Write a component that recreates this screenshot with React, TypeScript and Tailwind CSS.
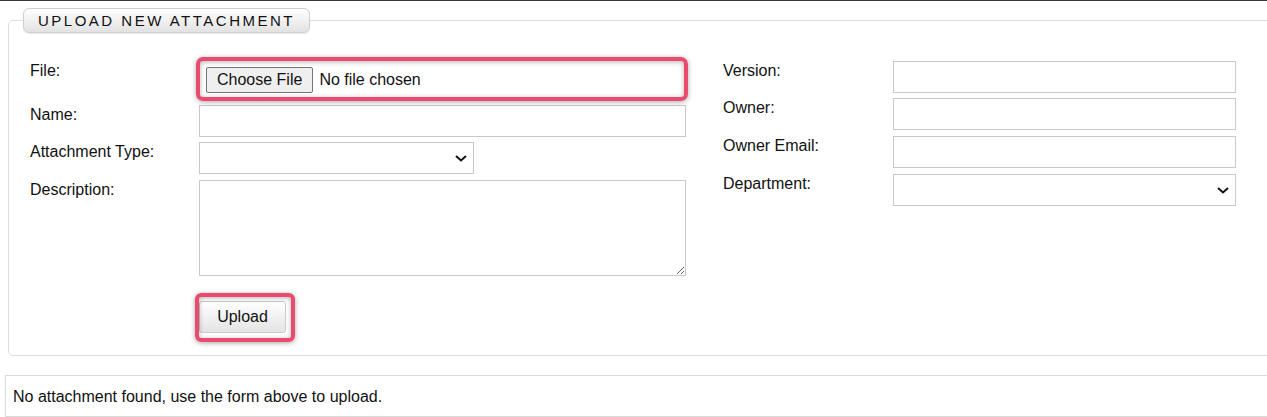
import React from 'react'

const font = { fontFamily: '"Liberation Sans", Arial, sans-serif' }

const Chevron = () => (
  <svg
    width="12"
    height="7"
    viewBox="0 0 12 7"
    className="pointer-events-none absolute right-[7px] top-[13px]"
  >
    <polyline points="1,1 6,5.5 11,1" fill="none" stroke="#111" strokeWidth="2" />
  </svg>
)

const Highlight = ({ className }: { className: string }) => (
  <div
    className={`pointer-events-none absolute border-4 border-[#ea4a6e] shadow-[0_1px_5px_rgba(0,0,0,0.35),inset_0_1px_5px_rgba(0,0,0,0.3)] ${className}`}
  />
)

const Row: React.FC<{ label: string; labelWidth: string; className?: string; children: React.ReactNode }> = ({
  label,
  labelWidth,
  className = '',
  children,
}) => (
  <div className={`flex items-start ${className}`}>
    <label className={`${labelWidth} shrink-0 mt-[1px] text-[16px] leading-[18px] text-[#111]`}>{label}</label>
    {children}
  </div>
)

export default function App() {
  return (
    <div className="w-full overflow-hidden border-t border-[#3a3a3a] bg-white pb-4" style={font}>
      <fieldset className="ml-[8px] mt-[7px] w-[1290px] rounded-[5px] border border-[#dcdcdc] p-0 pb-[22px]">
        <legend className="ml-[14px] h-[25px] rounded-[6px] border border-[#cfcfcf] bg-gradient-to-b from-white to-[#e2e2e2] px-[14px] text-[15px] leading-[23px] tracking-[2.5px] text-[#111] shadow-[0_1px_1px_rgba(0,0,0,0.08)]">
          UPLOAD NEW ATTACHMENT
        </legend>

        <div className="flex pl-[21px] pt-[28px]">
          {/* left column */}
          <div className="w-[656px]">
            <Row label="File:" labelWidth="w-[169px]">
              <div className="relative flex h-[38px] w-[487px] items-center pl-[7px]">
                <Highlight className="-left-[3px] -top-[4px] -right-[2px] -bottom-[2px] rounded-[7px]" />
                <button className="h-[26px] rounded-[2px] border border-[#767676] bg-[#efefef] px-[10px] text-[16px] leading-[18px] text-[#111]">
                  Choose File
                </button>
                <span className="ml-[6px] text-[16px] text-[#111]">No file chosen</span>
              </div>
            </Row>
            <Row label="Name:" labelWidth="w-[169px]" className="mt-[6px]">
              <input className="h-[32px] w-[487px] border border-[#c8c8c8] bg-white outline-none" />
            </Row>
            <Row label="Attachment Type:" labelWidth="w-[169px]" className="mt-[5px]">
              <div className="relative">
                <select className="h-[32px] w-[275px] appearance-none border border-[#c8c8c8] bg-white outline-none" />
                <Chevron />
              </div>
            </Row>
            <Row label="Description:" labelWidth="w-[169px]" className="mt-[6px]">
              <textarea className="block h-[96px] w-[487px] border border-[#c8c8c8] bg-white outline-none" />
            </Row>
            <div className="mt-[25px] pl-[169px]">
              <div className="relative inline-block">
                <Highlight className="-left-[4px] -top-[8px] -right-[9px] -bottom-[9px] rounded-[6px]" />
                <button className="h-[32px] w-[87px] rounded-[3px] border border-[#c9c9c9] bg-gradient-to-b from-white to-[#e4e4e4] text-[16px] text-[#111]">
                  Upload
                </button>
              </div>
            </div>
          </div>

          {/* right column */}
          <div className="ml-[37px] w-[513px]">
            <Row label="Version:" labelWidth="w-[170px]">
              <input className="h-[32px] w-[343px] border border-[#c8c8c8] bg-white outline-none" />
            </Row>
            <Row label="Owner:" labelWidth="w-[170px]" className="mt-[5px]">
              <input className="h-[32px] w-[343px] border border-[#c8c8c8] bg-white outline-none" />
            </Row>
            <Row label="Owner Email:" labelWidth="w-[170px]" className="mt-[6px]">
              <input className="h-[32px] w-[343px] border border-[#c8c8c8] bg-white outline-none" />
            </Row>
            <Row label="Department:" labelWidth="w-[170px]" className="mt-[6px]">
              <div className="relative">
                <select className="h-[32px] w-[343px] appearance-none border border-[#c8c8c8] bg-white outline-none" />
                <Chevron />
              </div>
            </Row>
          </div>
        </div>
      </fieldset>

      <div className="ml-[5px] mt-[19px] h-[42px] w-[1290px] border border-[#dadada] pl-[7px] pt-[12px] text-[16px] leading-[18px] text-[#111]">
        No attachment found, use the form above to upload.
      </div>
    </div>
  )
}
